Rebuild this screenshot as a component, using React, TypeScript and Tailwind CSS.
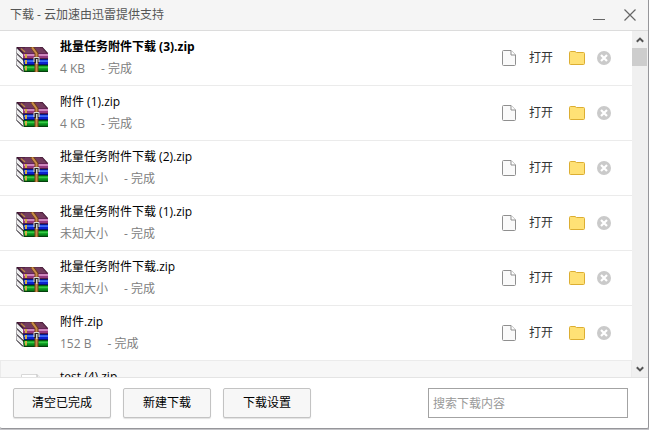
import type { ReactNode } from "react";

type Download = {
  name: string;
  size: string;
  fresh?: boolean;
};

const downloads: Download[] = [
  { name: "批量任务附件下载 (3).zip", size: "4 KB", fresh: true },
  { name: "附件 (1).zip", size: "4 KB" },
  { name: "批量任务附件下载 (2).zip", size: "未知大小" },
  { name: "批量任务附件下载 (1).zip", size: "未知大小" },
  { name: "批量任务附件下载.zip", size: "未知大小" },
  { name: "附件.zip", size: "152 B" },
];

function ArchiveIcon() {
  return (
    <svg width="32" height="25" viewBox="0 0 32 25" className="mt-0.5 shrink-0" aria-hidden>
      {/* page blocks on the left side */}
      <path d="M0 1 H2 L8 7 V24.5 H6 L0 18 V14 L1 13 L0 12 V8 L1 7 L0 6 Z" fill="#77727a" />
      <path d="M0.6 1.6 L7.4 8 V12 L0.6 5.8 Z M0.6 7.6 L7.4 14 V18 L0.6 11.8 Z M0.6 13.6 L7.4 20 V24 L0.6 17.8 Z" fill="#f8f8f8" />
      <path d="M1 3.8 L6.5 9.5 M1 9.8 L6.5 15.5 M1 15.8 L6.5 21.5" stroke="#d4d4d8" strokeWidth="0.6" />
      <path d="M0.5 6.2 L7.5 12.6 M0.5 12.2 L7.5 18.6 M0.5 18.2 L7.5 24.6" stroke="#39343a" strokeWidth="0.8" />
      {/* purple book */}
      <path d="M0 0 H26.5 L32 6 V12 H7 V7 Z" fill="#37102c" />
      <path d="M2 0.5 H26 L31 6 H7.5 Z" fill="#6b3455" />
      <path d="M9 1 H24 M8 3 H27 M9 5 H29" stroke="#854a70" strokeWidth="0.7" />
      <path d="M7 6.5 H32 V11.3 H7 Z" fill="#95397f" />
      <path d="M8 7 H32 V9 H8 Z" fill="#cf86be" />
      <path d="M5 1.5 L9 5" stroke="#b98b42" strokeWidth="1.2" fill="none" />
      {/* blue book */}
      <path d="M7 12 H32 V18 H8 Z" fill="#02105a" />
      <path d="M8 12.6 H32 V17.2 H8 Z" fill="#0c22cf" />
      <path d="M8 13.2 H32 V15 H8 Z" fill="#3c6ff5" />
      {/* green book */}
      <path d="M7 18 H32 V25 H8 Z" fill="#043f0b" />
      <path d="M8 18.7 H32 V23.7 H8 Z" fill="#078f1b" />
      <path d="M8 19.5 H32 V21.3 H8 Z" fill="#36cb45" />
      <path d="M9 7 h2 v4 h-2 z M9 13 h2 v4 h-2 z M9 19 h2 v4.5 h-2 z" fill="#d2ad45" />
      {/* strap and buckle */}
      <path d="M14 0 H18 L22.5 6 V25 H18.5 V6.5 Z" fill="#6e3f16" />
      <path d="M16 0.3 L20.5 6.5 V25" stroke="#c98c48" strokeWidth="2" fill="none" />
      <path d="M18 10 h5 v6 h-5 z" fill="#2c2628" />
      <path d="M18 15 V10.5 H23 V15" fill="none" stroke="#dcdcd6" />
      <path d="M20 12 h1.5 v5 h-1.5 z" fill="#d8d8d0" />
    </svg>
  );
}

function FileIcon() {
  return (
    <svg width="14" height="16" viewBox="0 0 14 16" fill="none" aria-hidden>
      <path d="M1.5 0.5 H9 L13.5 5 V14.5 Q13.5 15.5 12.5 15.5 H1.5 Q0.5 15.5 0.5 14.5 V1.5 Q0.5 0.5 1.5 0.5 Z" fill="#fafafa" stroke="#8f8f8f" />
      <path d="M9 0.5 V5 H13.5" fill="#fff" stroke="#8f8f8f" />
    </svg>
  );
}

function FolderIcon() {
  return (
    <svg width="16" height="14" viewBox="0 0 16 14" aria-hidden>
      <path
        d="M1.5 0.5 H6 L7.5 1.5 H14.5 Q15.5 1.5 15.5 2.5 V12.5 Q15.5 13.5 14.5 13.5 H1.5 Q0.5 13.5 0.5 12.5 V1.5 Q0.5 0.5 1.5 0.5 Z"
        fill="#ffe175"
        stroke="#dcae32"
      />
    </svg>
  );
}

function RemoveIcon() {
  return (
    <svg width="14" height="14" viewBox="0 0 14 14" aria-hidden>
      <circle cx="7" cy="7" r="7" fill="#cacaca" />
      <path d="M4 4 L10 10 M10 4 L4 10" stroke="#fff" strokeWidth="2.2" />
    </svg>
  );
}

function DownloadRow({ item }: { item: Download }) {
  return (
    <li className="flex h-[55px] shrink-0 items-center border-b border-[#ebebeb] pr-[21px] pl-4">
      <ArchiveIcon />
      <div className="ml-3 min-w-0 flex-1">
        <p className={item.fresh ? "truncate leading-[22px] font-bold text-black" : "truncate leading-[22px] text-black"}>
          {item.name}
        </p>
        <p className="flex gap-4 leading-[22px] text-[#808080]">
          <span>{item.size}</span>
          <span>- 完成</span>
        </p>
      </div>
      <div className="flex shrink-0 items-center">
        <FileIcon />
        <button type="button" className="ml-[13px] leading-5 text-[#333]">打开</button>
        <button type="button" aria-label="打开文件夹" className="ml-4">
          <FolderIcon />
        </button>
        <button type="button" aria-label="删除" className="ml-3">
          <RemoveIcon />
        </button>
      </div>
    </li>
  );
}

function Scrollbar() {
  return (
    <div className="flex w-4 shrink-0 flex-col items-center bg-[#f0f0f0]">
      <button type="button" aria-label="向上滚动" className="flex h-[17px] w-4 items-center justify-center">
        <svg width="8" height="6" viewBox="0 0 8 6" aria-hidden>
          <path d="M0.8 4.8 L4 1.6 L7.2 4.8" fill="none" stroke="#555" strokeWidth="2" />
        </svg>
      </button>
      <div className="h-[18px] w-[15px] self-start bg-[#cdcdcd]" />
      <button type="button" aria-label="向下滚动" className="mt-auto flex h-[17px] w-4 items-center justify-center">
        <svg width="8" height="6" viewBox="0 0 8 6" aria-hidden>
          <path d="M0.8 1.2 L4 4.4 L7.2 1.2" fill="none" stroke="#555" strokeWidth="2" />
        </svg>
      </button>
    </div>
  );
}

function FooterButton({ children }: { children: ReactNode }) {
  return (
    <button
      type="button"
      className="h-[30px] min-w-[88px] rounded-xs border border-[#c3c3c3] bg-[#f7f7f7] px-[18px] text-black shadow-[0_1px_1px_rgba(0,0,0,0.12)]"
    >
      {children}
    </button>
  );
}

export default function App() {
  return (
    <div className="h-screen bg-[#c4c4c8] pb-px font-['Open_Sans','Noto_Sans_CJK_SC',sans-serif] text-xs">
      <div className="flex h-full flex-col rounded-b-xs border-r border-b border-[#96969a] bg-white">
        <header className="flex h-[31px] shrink-0 items-center justify-between border-b border-[#dcdcdc] bg-[#f5f5f5] pr-3 pl-[10px]">
          <h1 className="text-[#555]">下载 - 云加速由迅雷提供支持</h1>
          <div className="flex items-center gap-[19px]">
            <button type="button" aria-label="最小化">
              <svg width="12" height="12" viewBox="0 0 12 12" aria-hidden>
                <path d="M0 10.5 H12" stroke="#666" />
              </svg>
            </button>
            <button type="button" aria-label="关闭">
              <svg width="12" height="12" viewBox="0 0 12 12" aria-hidden>
                <path d="M0.5 0.5 L11.5 11.5 M11.5 0.5 L0.5 11.5" stroke="#666" strokeWidth="1.2" />
              </svg>
            </button>
          </div>
        </header>

        <main className="flex min-h-0 flex-1">
          <ul className="flex min-w-0 flex-1 flex-col overflow-hidden">
            {downloads.map((item) => (
              <DownloadRow key={item.name} item={item} />
            ))}
            <li className="flex h-[55px] shrink-0 items-start border border-t-0 border-[#ebebeb] bg-[#f7f7f7] pl-5">
              <svg width="22" height="30" viewBox="0 0 22 30" className="mt-[13px]" aria-hidden>
                <path d="M0.5 0.5 H16 L21.5 6 V29.5 H0.5 Z" fill="#fff" stroke="#d8d8d8" />
                <path d="M16 0.5 V6 H21.5" fill="#eee" stroke="#b5b5b5" />
              </svg>
              <p className="mt-[5px] ml-[17px] leading-[22px] text-black">test (4).zip</p>
            </li>
          </ul>
          <Scrollbar />
        </main>

        <footer className="flex h-[51px] shrink-0 items-center justify-between border-t border-[#e4e4e4] pr-5 pl-[13px]">
          <div className="flex gap-3">
            <FooterButton>清空已完成</FooterButton>
            <FooterButton>新建下载</FooterButton>
            <FooterButton>下载设置</FooterButton>
          </div>
          <input
            type="search"
            aria-label="搜索下载内容"
            placeholder="搜索下载内容"
            className="h-[30px] w-[200px] border border-[#a3a3a3] bg-white px-1 outline-none placeholder:text-[#999]"
          />
        </footer>
      </div>
    </div>
  );
}
